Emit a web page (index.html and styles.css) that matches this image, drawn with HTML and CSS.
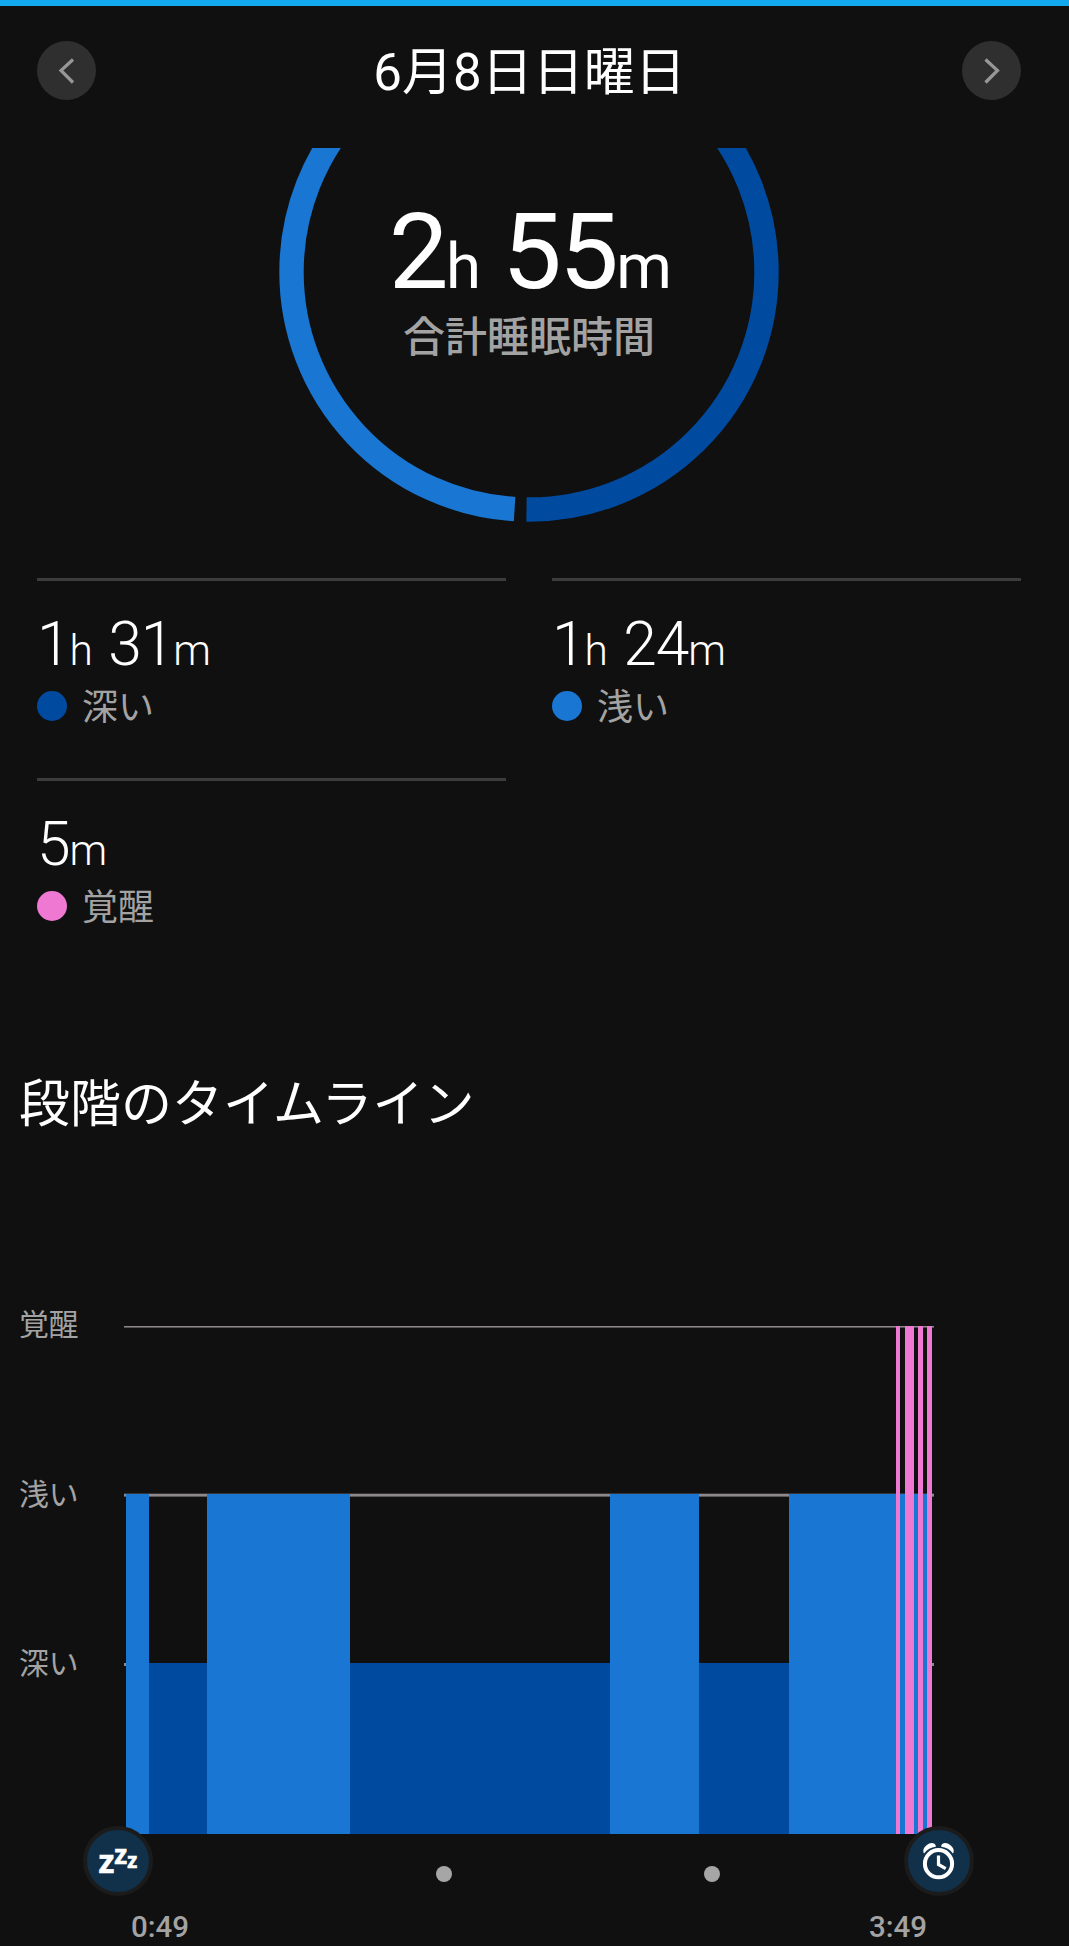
FILE: index.html
```html
<!DOCTYPE html>
<html lang="ja">
<head>
  <meta charset="UTF-8">
  <title>睡眠</title>
  <link rel="stylesheet" href="styles.css">
</head>
<body>

  <header class="header">
    <button class="nav-btn" aria-label="前の日">
      <svg width="59" height="59" viewBox="0 0 59 59"><path d="M36 18.500L24 29.500L36 41.500"/></svg>
    </button>
    <h1>6月8日日曜日</h1>
    <button class="nav-btn" aria-label="次の日">
      <svg width="59" height="59" viewBox="0 0 59 59"><path d="M23.500 18.500L35.500 29.500L23.500 41.500"/></svg>
    </button>
  </header>

  <section class="summary">
    <svg class="ring" width="500" height="375" viewBox="279 148 500 375">
      <path class="ring-light" d="M514.600 509.060A237.500 237.500 0 0 1 291.500 272A237.500 237.500 0 0 1 529 34.500"/>
      <path class="ring-deep" d="M526.500 509.490A237.500 237.500 0 0 0 766.500 272A237.500 237.500 0 0 0 529 34.500"/>
    </svg>
    <div class="total">
      <div class="total-value">2<small>h</small> 55<small>m</small></div>
      <div class="total-label">合計睡眠時間</div>
    </div>
  </section>

  <section class="stats">
    <div class="stat">
      <div class="stat-value">1<small>h</small> 31<small>m</small></div>
      <div class="stat-label"><span class="dot deep"></span><span>深い</span></div>
    </div>
    <div class="stat">
      <div class="stat-value">1<small>h</small> 24<small>m</small></div>
      <div class="stat-label"><span class="dot light"></span><span>浅い</span></div>
    </div>
    <div class="stat">
      <div class="stat-value">5<small>m</small></div>
      <div class="stat-label"><span class="dot awake"></span><span>覚醒</span></div>
    </div>
  </section>

  <h2>段階のタイムライン</h2>

  <section class="chart">
    <div class="levels">
      <span>覚醒</span>
      <span>浅い</span>
      <span>深い</span>
    </div>
    <svg class="plot" width="810" height="595" viewBox="124 0 810 595" shape-rendering="crispEdges">
      <g class="grid">
        <rect x="124" y="87" width="810" height="1"/>
        <rect x="124" y="88" width="810" height="1" opacity=".55"/>
        <rect x="124" y="254" width="810" height="1" opacity=".3"/>
        <rect x="124" y="255" width="810" height="2"/>
        <rect x="124" y="257" width="810" height="1" opacity=".6"/>
        <rect x="124" y="424" width="810" height="3"/>
      </g>
      <g class="fill-deep">
        <rect x="149" y="424" width="58" height="171"/>
        <rect x="350" y="424" width="260" height="171"/>
        <rect x="699" y="424" width="90" height="171"/>
      </g>
      <g class="fill-light">
        <rect x="126" y="255" width="23" height="340"/>
        <rect x="207" y="255" width="143" height="340"/>
        <rect x="610" y="255" width="89" height="340"/>
        <rect x="789" y="255" width="143" height="340"/>
      </g>
      <g class="fill-awake">
        <rect x="896" y="87" width="4" height="508"/>
        <rect x="905" y="87" width="9" height="508"/>
        <rect x="918" y="87" width="5" height="508"/>
        <rect x="927" y="87" width="5" height="508"/>
      </g>
    </svg>

    <!-- start / end markers sit on the corners of the plot -->
    <svg class="badge badge-start" width="70" height="70" viewBox="0 0 70 70">
      <circle cx="35" cy="35" r="33"/>
      <g class="zzz">
        <text x="15.500" y="46.700" font-size="32.500">z</text>
        <text x="31.200" y="38" font-size="26.500">z</text>
        <text x="44.300" y="42" font-size="20.500">z</text>
      </g>
    </svg>
    <svg class="badge badge-end" width="70" height="70" viewBox="0 0 70 70">
      <circle cx="35" cy="35" r="33"/>
      <g class="clock">
        <circle cx="34.500" cy="37.700" r="13.600"/>
        <path d="M34.500 29.500V38.500L41.700 42.700"/>
        <path class="bell" d="M19.500 26.500Q18.400 22.500 22.500 19.200Q27 15.700 30.800 18Q32 19 31.800 20.800Q24.500 21.600 20.100 27.400Z"/>
        <path class="bell" d="M49.500 26.500Q50.600 22.500 46.500 19.200Q42 15.700 38.200 18Q37 19 37.200 20.800Q44.500 21.600 48.900 27.400Z"/>
      </g>
    </svg>
  </section>

  <div class="ticks"><i></i><i></i></div>
  <div class="times"><span>0:49</span><span>3:49</span></div>

</body>
</html>
```
FILE: styles.css
```css
* {
  box-sizing: border-box;
}
body {
  margin: 0;
  height: 1946px;
  overflow: hidden;
  border-top: 6px solid #12a9ef;
  background: #101010;
  color: #fff;
  font-family: Roboto, "Noto Sans CJK JP", sans-serif;
}
svg {
  display: block;
}
h1, h2 {
  margin: 0;
  font-weight: 400;
}

.header {
  display: flex;
  justify-content: space-between;
  align-items: center;
  height: 142px;
  padding: 0 48px 13px 37px;
}
.header h1 {
  padding-top: 4px;
  padding-left: 1px;
  font-size: 51px;
  line-height: 60px;
}
.nav-btn {
  width: 59px;
  height: 59px;
  padding: 0;
  border: 0;
  border-radius: 50%;
  background: #2f2f2f;
}
.nav-btn path {
  fill: none;
  stroke: #979797;
  stroke-width: 3.2;
}

/* ring and text share one grid cell */
.summary {
  display: grid;
  grid-template-columns: 500px;
  height: 430px;
  padding-left: 279px;
}
.ring, .total {
  grid-area: 1 / 1;
}
.ring path {
  fill: none;
  stroke-width: 24.4;
}
.ring .ring-light {
  stroke: #1976d2;
}
.ring .ring-deep {
  stroke: #004ba0;
}
.total {
  padding-top: 51px;
  text-align: center;
}
.total-value {
  font-size: 106.5px;
  line-height: 106px;
  letter-spacing: -2.7px;
}
.total-value small {
  font-size: 63.5px;
  line-height: 1;
}
.total-label {
  margin-top: 8px;
  color: #a3a3a3;
  font-size: 42px;
  font-weight: 500;
  line-height: 50px;
}

.stats {
  display: grid;
  grid-template-columns: 469px 469px;
  grid-auto-rows: 200px;
  column-gap: 46px;
  padding-left: 37px;
}
.stat {
  border-top: 3px solid #3c3c3c;
}
.stat-value {
  margin-top: 34px;
  font-size: 60.5px;
  font-weight: 300;
  line-height: 60px;
  letter-spacing: -1px;
  word-spacing: 2.5px;
}
.stat-value small {
  font-size: 42.5px;
  line-height: 1;
}
.stat-label {
  display: flex;
  align-items: center;
  gap: 15px;
  height: 36px;
  margin-top: 13px;
  color: #a3a3a3;
  font-size: 36px;
  line-height: 36px;
}
.stat-label span:last-child {
  padding-top: 4px;
}
.dot {
  width: 30px;
  height: 30px;
  border-radius: 50%;
}
.dot.deep {
  background: #004ba0;
}
.dot.light {
  background: #1976d2;
}
.dot.awake {
  background: #ee78d2;
}

h2 {
  margin-top: 97px;
  padding-left: 19px;
  font-size: 51px;
  line-height: 60px;
}

.chart {
  display: flex;
  position: relative;
  height: 595px;
  margin-top: 104px;
}
.levels {
  width: 124px;
  padding-top: 1px;
  padding-left: 19px;
  color: #a3a3a3;
  font-size: 29.8px;
}
.levels span {
  display: block;
  line-height: 169.5px;
}
.grid {
  fill: #8d898a;
}
.fill-deep {
  fill: #004ba0;
}
.fill-light {
  fill: #1976d2;
}
.fill-awake {
  fill: #ee78d2;
}

.badge {
  position: absolute;
  top: 587px;
}
.badge-start {
  left: 83px;
}
.badge-end {
  left: 904px;
}
.badge > circle {
  fill: #11304a;
  stroke: #1b1b1b;
  stroke-width: 4;
}
.zzz {
  fill: #fff;
  stroke: #fff;
  stroke-width: .6;
  font-family: "Open Sans", "Noto Sans", sans-serif;
  font-weight: 700;
}
.clock {
  fill: none;
  stroke: #fff;
  stroke-width: 4;
}
.clock path {
  stroke-width: 3.2;
}
.clock .bell {
  fill: #fff;
  stroke: none;
}

.ticks {
  display: flex;
  gap: 252px;
  padding: 32px 0 0 436px;
}
.ticks i {
  width: 16px;
  height: 16px;
  border-radius: 50%;
  background: #a6a6a6;
}
.times {
  display: flex;
  justify-content: space-between;
  width: 927px;
  margin-top: 27px;
  padding-left: 131px;
  color: #a3a3a3;
  font-size: 29.5px;
  font-weight: 500;
  line-height: 36px;
}
```
